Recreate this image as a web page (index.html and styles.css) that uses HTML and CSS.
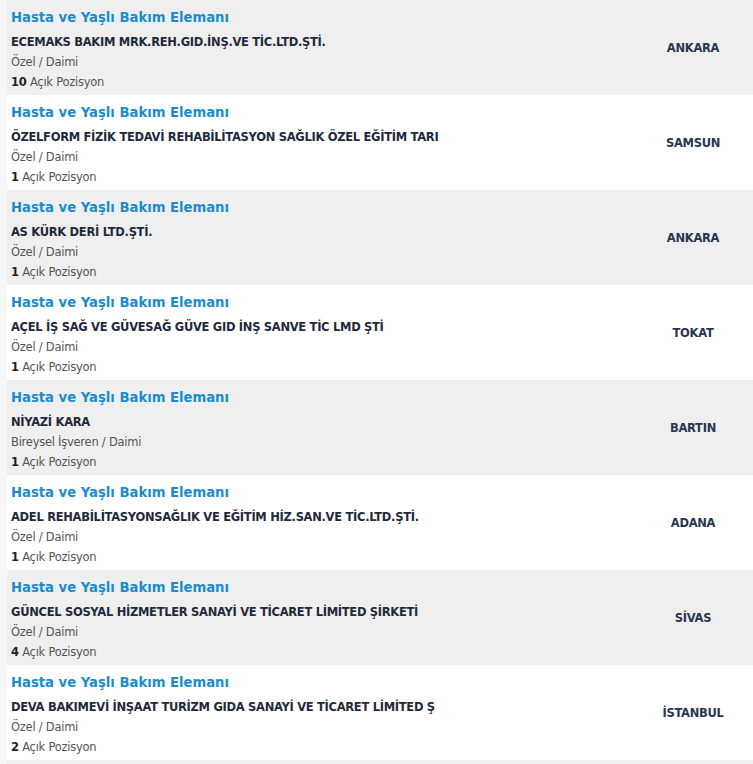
FILE: index.html
```html
<!DOCTYPE html>
<html lang="tr">
<head>
<meta charset="utf-8">
<link rel="stylesheet" href="styles.css">
</head>
<body>
<div class="list">
  <div class="row alt">
    <div class="info">
      <a class="title">Hasta ve Yaşlı Bakım Elemanı</a>
      <div class="company">ECEMAKS BAKIM MRK.REH.GID.İNŞ.VE TİC.LTD.ŞTİ.</div>
      <div class="meta">Özel / Daimi</div>
      <div class="meta"><b>10</b> Açık Pozisyon</div>
    </div>
    <div class="city">ANKARA</div>
  </div>
  <div class="row">
    <div class="info">
      <a class="title">Hasta ve Yaşlı Bakım Elemanı</a>
      <div class="company">ÖZELFORM FİZİK TEDAVİ REHABİLİTASYON SAĞLIK ÖZEL EĞİTİM TARI</div>
      <div class="meta">Özel / Daimi</div>
      <div class="meta"><b>1</b> Açık Pozisyon</div>
    </div>
    <div class="city">SAMSUN</div>
  </div>
  <div class="row alt">
    <div class="info">
      <a class="title">Hasta ve Yaşlı Bakım Elemanı</a>
      <div class="company">AS KÜRK DERİ LTD.ŞTİ.</div>
      <div class="meta">Özel / Daimi</div>
      <div class="meta"><b>1</b> Açık Pozisyon</div>
    </div>
    <div class="city">ANKARA</div>
  </div>
  <div class="row">
    <div class="info">
      <a class="title">Hasta ve Yaşlı Bakım Elemanı</a>
      <div class="company">AÇEL İŞ SAĞ VE GÜVESAĞ GÜVE GID İNŞ SANVE TİC LMD ŞTİ</div>
      <div class="meta">Özel / Daimi</div>
      <div class="meta"><b>1</b> Açık Pozisyon</div>
    </div>
    <div class="city">TOKAT</div>
  </div>
  <div class="row alt">
    <div class="info">
      <a class="title">Hasta ve Yaşlı Bakım Elemanı</a>
      <div class="company">NİYAZİ KARA</div>
      <div class="meta">Bireysel İşveren / Daimi</div>
      <div class="meta"><b>1</b> Açık Pozisyon</div>
    </div>
    <div class="city">BARTIN</div>
  </div>
  <div class="row">
    <div class="info">
      <a class="title">Hasta ve Yaşlı Bakım Elemanı</a>
      <div class="company">ADEL REHABİLİTASYONSAĞLIK VE EĞİTİM HİZ.SAN.VE TİC.LTD.ŞTİ.</div>
      <div class="meta">Özel / Daimi</div>
      <div class="meta"><b>1</b> Açık Pozisyon</div>
    </div>
    <div class="city">ADANA</div>
  </div>
  <div class="row alt">
    <div class="info">
      <a class="title">Hasta ve Yaşlı Bakım Elemanı</a>
      <div class="company">GÜNCEL SOSYAL HİZMETLER SANAYİ VE TİCARET LİMİTED ŞİRKETİ</div>
      <div class="meta">Özel / Daimi</div>
      <div class="meta"><b>4</b> Açık Pozisyon</div>
    </div>
    <div class="city">SİVAS</div>
  </div>
  <div class="row">
    <div class="info">
      <a class="title">Hasta ve Yaşlı Bakım Elemanı</a>
      <div class="company">DEVA BAKIMEVİ İNŞAAT TURİZM GIDA SANAYİ VE TİCARET LİMİTED Ş</div>
      <div class="meta">Özel / Daimi</div>
      <div class="meta"><b>2</b> Açık Pozisyon</div>
    </div>
    <div class="city">İSTANBUL</div>
  </div>
  <div class="row alt"></div>
</div>
</body>
</html>
```
FILE: styles.css
```css
html, body {
  margin: 0;
  padding: 0;
}
body {
  background: #f7f7f7;
  font-family: "DejaVu Sans", Verdana, sans-serif;
  overflow: hidden;
}
.list {
  margin-left: 7px;
  display: flex;
  flex-direction: column;
}
.row {
  height: 95px;
  background: #ffffff;
  display: flex;
  align-items: center;
  flex-shrink: 0;
}
.row.alt {
  background: #efefef;
}
.info {
  flex: 1;
  padding: 8px 0 3px 4px;
  display: flex;
  flex-direction: column;
  align-self: stretch;
  box-sizing: border-box;
}
.title {
  display: block;
  height: 20px;
  line-height: 20px;
  margin-bottom: 4px;
  font-size: 13.2px;
  font-weight: bold;
  color: #1a8cce;
}
.company {
  height: 20px;
  line-height: 20px;
  font-size: 11.5px;
  font-weight: bold;
  color: #1f2a3c;
  letter-spacing: -0.3px;
  white-space: nowrap;
}
.meta {
  height: 20px;
  line-height: 20px;
  font-size: 11.5px;
  color: #555555;
  letter-spacing: -0.25px;
}
.meta b {
  color: #222;
}
.city {
  width: 120px;
  text-align: center;
  font-size: 11.5px;
  font-weight: bold;
  color: #283650;
  letter-spacing: -0.3px;
}
```
